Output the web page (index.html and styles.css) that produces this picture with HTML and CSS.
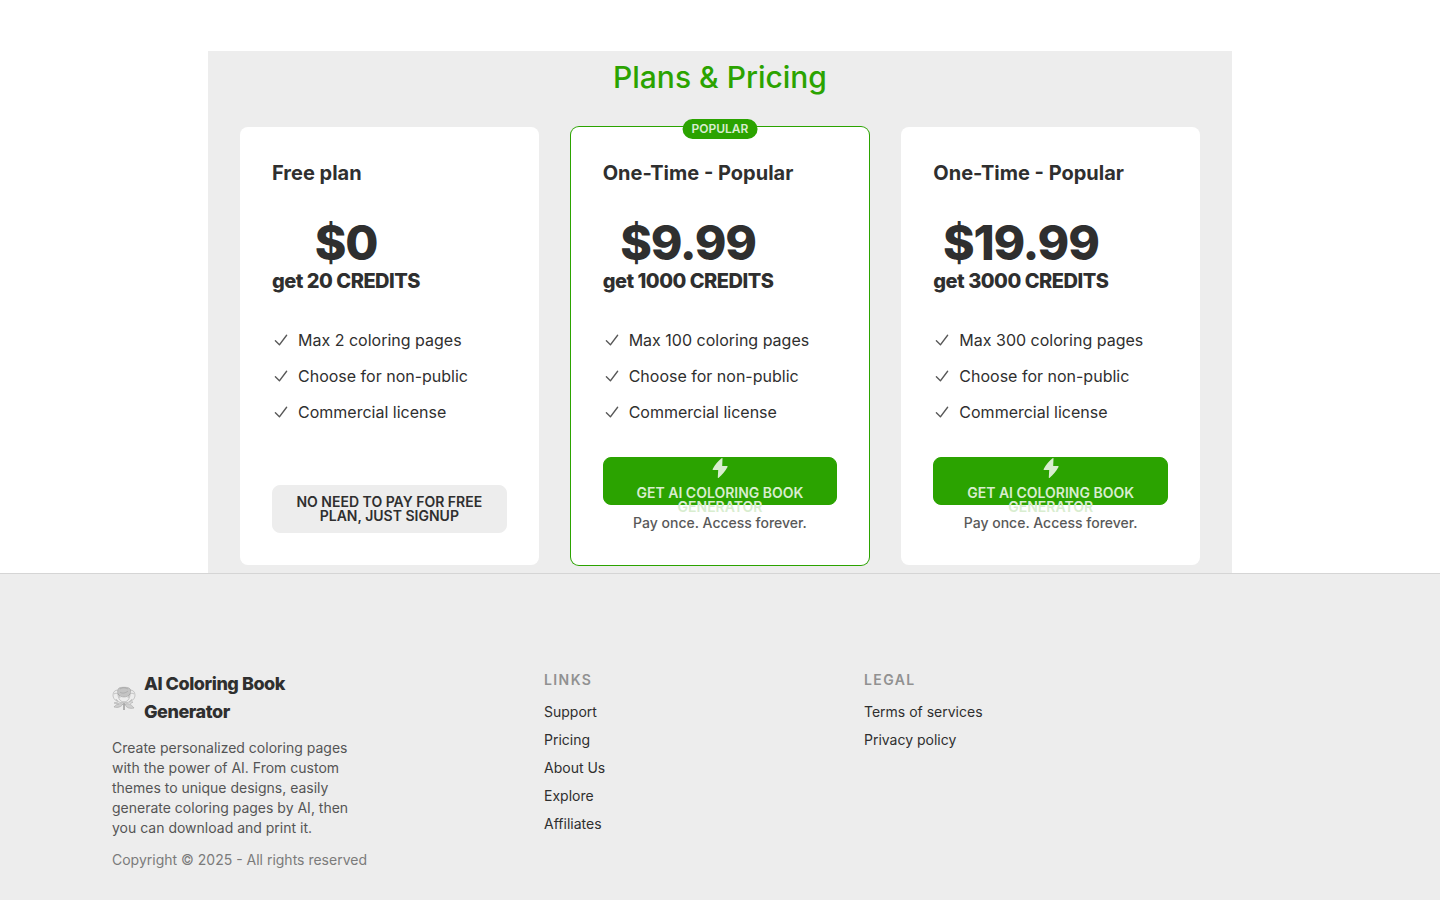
FILE: index.html
```html
<!DOCTYPE html>
<html lang="en">
<head>
  <meta charset="UTF-8">
  <meta name="viewport" content="width=device-width, initial-scale=1.0">
  <title>AI Coloring Book Generator - Pricing</title>
  <link rel="stylesheet" href="styles.css">
</head>
<body>
  <!-- shared icons -->
  <svg class="sprite" aria-hidden="true">
    <symbol id="check" viewBox="0 0 20 20">
      <path fill-rule="evenodd" d="M16.704 4.153a.75.75 0 01.143 1.052l-8 10.5a.75.75 0 01-1.127.075l-4.5-4.5a.75.75 0 011.06-1.06l3.894 3.893 7.48-9.817a.75.75 0 011.05-.143z" clip-rule="evenodd"/>
    </symbol>
    <symbol id="bolt" viewBox="0 0 20 20">
      <path d="M11.600.3a.5.5 0 01.9.4L12.200 8H17a.6.6 0 01.5.9C15 13.500 12 17 8.700 19.700a.5.5 0 01-.9-.4L8.200 12H3.200a.6.6 0 01-.5-.9C5.200 6.500 8 3 11.600.3z"/>
    </symbol>
  </svg>

  <main>
    <section class="pricing" id="pricing">
      <h2 class="pricing-title">Plans &amp; Pricing</h2>
      <div class="plans">
        <div class="card">
          <h3 class="card-title">Free plan</h3>
          <div class="price">
            <span class="amount">$0</span>
            <span class="credits">get 20 CREDITS</span>
          </div>
          <ul class="features">
            <li><svg class="check"><use href="#check"/></svg><span>Max 2 coloring pages</span></li>
            <li><svg class="check"><use href="#check"/></svg><span>Choose for non-public</span></li>
            <li><svg class="check"><use href="#check"/></svg><span>Commercial license</span></li>
          </ul>
          <div class="card-action">
            <button class="btn" type="button">NO NEED TO PAY FOR FREE PLAN, JUST SIGNUP</button>
          </div>
        </div>

        <div class="card popular">
          <span class="badge">POPULAR</span>
          <h3 class="card-title">One-Time - Popular</h3>
          <div class="price">
            <span class="amount">$9.99</span>
            <span class="credits">get 1000 CREDITS</span>
          </div>
          <ul class="features">
            <li><svg class="check"><use href="#check"/></svg><span>Max 100 coloring pages</span></li>
            <li><svg class="check"><use href="#check"/></svg><span>Choose for non-public</span></li>
            <li><svg class="check"><use href="#check"/></svg><span>Commercial license</span></li>
          </ul>
          <div class="card-action">
            <button class="btn btn-primary" type="button"><svg class="bolt"><use href="#bolt"/></svg>Get AI Coloring Book Generator</button>
            <p class="note">Pay once. Access forever.</p>
          </div>
        </div>

        <div class="card">
          <h3 class="card-title">One-Time - Popular</h3>
          <div class="price">
            <span class="amount">$19.99</span>
            <span class="credits">get 3000 CREDITS</span>
          </div>
          <ul class="features">
            <li><svg class="check"><use href="#check"/></svg><span>Max 300 coloring pages</span></li>
            <li><svg class="check"><use href="#check"/></svg><span>Choose for non-public</span></li>
            <li><svg class="check"><use href="#check"/></svg><span>Commercial license</span></li>
          </ul>
          <div class="card-action">
            <button class="btn btn-primary" type="button"><svg class="bolt"><use href="#bolt"/></svg>Get AI Coloring Book Generator</button>
            <p class="note">Pay once. Access forever.</p>
          </div>
        </div>
      </div>
    </section>
  </main>

  <footer class="footer">
    <div class="footer-inner">
      <div class="about">
        <a class="brand" href="#">
          <svg class="logo" viewBox="0 0 24 24" aria-hidden="true">
            <path class="petals" d="M7 2c2-1 8-1 10 0 2 1 2 4 1 6s-4 3-6 3-5-1-6-3 0-5 1-6z"/>
            <path d="M8 3c3-2 6-1 8 0M8 6c2 2 6 1 8-1M6 4C3 4 1 6 1 9s2 6 5 6M18 4c3 0 5 2 5 5s-2 6-5 6M2 8c3-2 5 0 6 4M22 8c-3-2-5 0-6 4M6 8c0 5 3 8 6 8s6-3 6-8M4 13c2 4 6 4 8 3 2 1 6 1 8-3"/>
            <path class="leaf" d="M11 18c-3-1-7 0-9 3 4 1 7 0 9-3zM13 18c3-1 6 0 9 4-4 1-8 0-9-4z"/>
            <path d="M6 16l-4 1 5 1M17 16l4 0-3 2"/>
            <path class="stem" d="M12 17v7"/>
          </svg>
          <strong>AI Coloring Book Generator</strong>
        </a>
        <p class="description">Create personalized coloring pages with the power of AI. From custom themes to unique designs, easily generate coloring pages by AI, then you can download and print it.</p>
        <p class="copyright">Copyright © 2025 - All rights reserved</p>
      </div>

      <div class="footer-nav">
        <nav class="link-group" aria-labelledby="links-title">
          <h4 class="link-title" id="links-title">LINKS</h4>
          <a href="#">Support</a>
          <a href="#pricing">Pricing</a>
          <a href="#">About Us</a>
          <a href="#">Explore</a>
          <a href="#">Affiliates</a>
        </nav>
        <nav class="link-group" aria-labelledby="legal-title">
          <h4 class="link-title" id="legal-title">LEGAL</h4>
          <a href="#">Terms of services</a>
          <a href="#">Privacy policy</a>
        </nav>
      </div>
    </div>
  </footer>
</body>
</html>
```
FILE: styles.css
```css
* {
  box-sizing: border-box;
  margin: 0;
  padding: 0;
}
body {
  font-family: Inter, "Liberation Sans", sans-serif;
  font-size: 16px;
  line-height: 24px;
  color: #2f2f2f;
  background-color: #fff;
}
a {
  color: inherit;
  text-decoration: none;
}
svg {
  flex-shrink: 0;
  fill: currentColor;
}
.sprite {
  display: none;
}

/* pricing */
main {
  padding-top: 51px;
}
.pricing {
  max-width: 1024px;
  margin: 0 auto;
  padding: 8px 32px;
  background-color: #ededed;
}
.pricing-title {
  margin-bottom: 32px;
  font-size: 30px;
  font-weight: 500;
  line-height: 36px;
  text-align: center;
  color: #2ba300;
}
.plans {
  display: grid;
  grid-template-columns: repeat(3, 1fr);
  gap: 32px;
}
.card {
  position: relative;
  display: flex;
  flex-direction: column;
  align-items: flex-start;
  gap: 32px;
  padding: 32px;
  border-radius: 8px;
  background-color: #fff;
}
.popular {
  box-shadow: 0 0 0 1px #2ba300;
}
.badge {
  position: absolute;
  top: -8px;
  left: 50%;
  transform: translateX(-50%);
  height: 20px;
  padding: 0 9px;
  border-radius: 10px;
  font-size: 12px;
  font-weight: 600;
  line-height: 20px;
  color: #d8edcf;
  background-color: #2ba300;
}
.card-title {
  font-size: 20px;
  font-weight: 700;
  line-height: 28px;
}
.price {
  display: flex;
  flex-direction: column;
  align-items: center;
  font-weight: 800;
}
.amount {
  font-size: 48px;
  line-height: 48px;
  letter-spacing: -0.025em;
}
.credits {
  font-size: 20px;
  line-height: 28px;
  letter-spacing: -0.025em;
}
.features {
  display: flex;
  flex-direction: column;
  gap: 10px;
  list-style: none;
  line-height: 26px;
}
.features li {
  display: flex;
  align-items: center;
  gap: 8px;
}
.check {
  width: 18px;
  height: 18px;
  opacity: 0.8;
}
.card-action {
  width: 100%;
  margin-top: auto;
}
.btn {
  display: flex;
  flex-wrap: wrap;
  align-items: center;
  justify-content: center;
  gap: 8px;
  width: 100%;
  height: 48px;
  padding: 0 16px;
  border: 1px solid #ededed;
  border-radius: 8px;
  font-family: inherit;
  font-size: 14px;
  font-weight: 600;
  line-height: 14px;
  text-align: center;
  text-transform: uppercase;
  color: #2f2f2f;
  background-color: #ededed;
  cursor: pointer;
}
.btn-primary {
  border-color: #2ba300;
  color: #d8edcf;
  background-color: #2ba300;
}
.bolt {
  width: 20px;
  height: 20px;
}
.note {
  margin-top: 8px;
  font-size: 14px;
  font-weight: 500;
  line-height: 20px;
  text-align: center;
  color: #595959;
}

/* footer */
.footer {
  border-top: 1px solid #d5d5d5;
  background-color: #ededed;
  font-size: 14px;
  line-height: 20px;
}
.footer-inner {
  display: flex;
  max-width: 1280px;
  margin: 0 auto;
  padding: 96px 32px;
}
.about {
  flex-shrink: 0;
  width: 256px;
}
.brand {
  display: flex;
  align-items: center;
  gap: 8px;
  font-size: 18px;
  line-height: 28px;
  letter-spacing: -0.025em;
}
.brand strong {
  font-weight: 800;
}
.logo {
  width: 24px;
  height: 24px;
  fill: none;
  stroke: #999;
  stroke-width: 0.5;
}
.petals {
  fill: #c4c4c4;
}
.leaf {
  fill: #cfcfcf;
}
.stem {
  stroke: #555;
  stroke-width: 0.8;
}
.description {
  margin-top: 12px;
  color: #555;
}
.copyright {
  margin-top: 12px;
  color: #7b7b7b;
}
.footer-nav {
  display: flex;
  flex: 1;
  justify-content: center;
}
.link-group {
  display: flex;
  flex-direction: column;
  align-items: flex-start;
  gap: 8px;
  width: 33.333%;
  padding: 0 16px;
}
.link-title {
  margin-bottom: 4px;
  font-weight: 600;
  letter-spacing: 0.1em;
  color: #919191;
}
```
